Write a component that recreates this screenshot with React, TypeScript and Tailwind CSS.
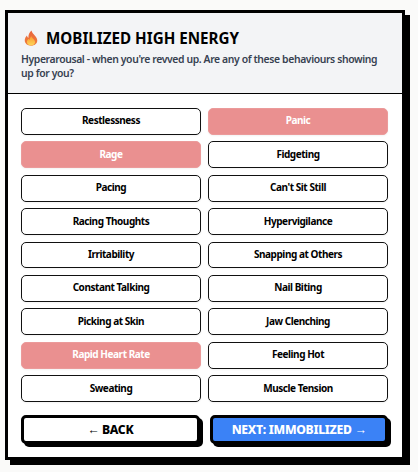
import React from 'react';

const behaviours = [
  { label: 'Restlessness', selected: false },
  { label: 'Panic', selected: true },
  { label: 'Rage', selected: true },
  { label: 'Fidgeting', selected: false },
  { label: 'Pacing', selected: false },
  { label: "Can't Sit Still", selected: false },
  { label: 'Racing Thoughts', selected: false },
  { label: 'Hypervigilance', selected: false },
  { label: 'Irritability', selected: false },
  { label: 'Snapping at Others', selected: false },
  { label: 'Constant Talking', selected: false },
  { label: 'Nail Biting', selected: false },
  { label: 'Picking at Skin', selected: false },
  { label: 'Jaw Clenching', selected: false },
  { label: 'Rapid Heart Rate', selected: true },
  { label: 'Feeling Hot', selected: false },
  { label: 'Sweating', selected: false },
  { label: 'Muscle Tension', selected: false },
];

const Flame = () => (
  <svg width="14" height="16" viewBox="0 0 15 17" className="shrink-0">
    <defs>
      <linearGradient id="flameOuter" x1="0" y1="0" x2="0" y2="1">
        <stop offset="0" stopColor="#e8643c" />
        <stop offset="1" stopColor="#f0803a" />
      </linearGradient>
      <linearGradient id="flameInner" x1="0" y1="0" x2="0" y2="1">
        <stop offset="0" stopColor="#fb9a2e" />
        <stop offset="1" stopColor="#fdd65a" />
      </linearGradient>
    </defs>
    <path
      d="M8 0.5C8.6 3 10 4 11.5 5.8C13.2 7.8 14.2 9.4 14.2 11.2C14.2 14.6 11.2 16.8 7.5 16.8C3.6 16.8 0.8 14.4 0.8 11C0.8 8.8 2 7 3.2 5.8C3.4 7 3.9 7.8 4.8 8.2C4.4 5.2 5.8 2.4 8 0.5Z"
      fill="url(#flameOuter)"
    />
    <path
      d="M8 6.5C8.4 8 9.6 8.8 10.6 10C11.4 11 11.9 11.9 11.9 12.9C11.9 15 10 16.6 7.6 16.6C5.2 16.6 3.2 15.1 3.2 12.9C3.2 11.4 4 10.2 5 9.4C5.2 10 5.5 10.4 6 10.6C6 9 6.8 7.6 8 6.5Z"
      fill="url(#flameInner)"
    />
  </svg>
);

export default function App() {
  return (
    <div className="h-[472px] w-[418px] overflow-hidden bg-[#fafaf9] pl-[5px] pt-[10px] font-['Noto_Sans','Open_Sans',sans-serif]">
      <div className="h-[450px] w-[400px] border-[3px] border-black bg-white shadow-[5px_5px_0_#000]">
        {/* Header */}
        <div className="h-[81px] border-b border-black bg-[#f3f4f6] px-[13px] pt-[15px]">
          <div className="flex items-center gap-[8px] pl-[3px]">
            <Flame />
            <h1 className="text-[15.2px] font-bold leading-[20px] text-black">MOBILIZED HIGH ENERGY</h1>
          </div>
          <p className="mt-[3.5px] text-[10.4px] font-semibold leading-[14.5px] tracking-[-0.38px] text-[#374151]">
            Hyperarousal - when you're revved up. Are any of these behaviours showing up for you?
          </p>
        </div>

        {/* Behaviour options */}
        <div className="pl-[13px] pr-[14px] pt-[14px]">
          <div className="grid grid-cols-2 gap-x-[7px] gap-y-[6.67px]">
            {behaviours.map((item) => (
              <button
                key={item.label}
                type="button"
                className={`h-[26.75px] rounded-[5px] border pb-[1px] text-[10px] font-bold tracking-[-0.45px] shadow-[0_1px_2px_rgba(0,0,0,0.05)] ${
                  item.selected
                    ? 'border-[#eb9a9a] bg-[#ea9090] text-white'
                    : 'border-[#111] bg-white text-black'
                }`}
              >
                {item.label}
              </button>
            ))}
          </div>

          {/* Actions */}
          <div className="mt-[13px] flex gap-[10.5px]">
            <button
              type="button"
              className="h-[29.3px] w-[178.5px] rounded-[5px] border-[3px] border-black bg-white text-[12.2px] font-extrabold tracking-[-0.3px] text-black shadow-[3px_3px_0_#000]"
            >
              ← BACK
            </button>
            <button
              type="button"
              className="h-[29.3px] w-[178px] rounded-[5px] border-[3px] border-black bg-[#3b82f6] text-[12.2px] font-extrabold tracking-[-0.3px] text-white shadow-[3px_3px_0_#000]"
            >
              NEXT: IMMOBILIZED →
            </button>
          </div>
        </div>
      </div>
    </div>
  );
}
